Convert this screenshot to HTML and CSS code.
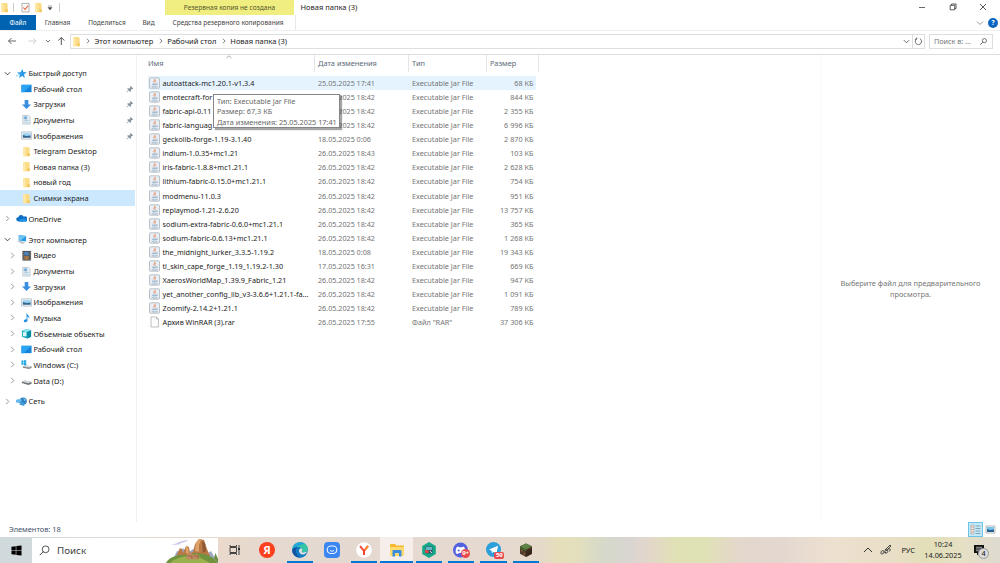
FILE: index.html
```html
<!DOCTYPE html>
<html lang="ru">
<head>
<meta charset="UTF-8">
<meta name="viewport" content="width=device-width, initial-scale=1.0">
<title>Новая папка (3)</title>
<link rel="stylesheet" href="styles.css">
</head>
<body>

<!-- icons -->
<svg class="defs">
  <symbol id="folder" viewBox="0 0 12 12"><path d="M2.500 1h5l2 1v9.300h-7z" fill="#fbdc86"/><path d="M2.500 1l2.500 1v9.600L2.500 11z" fill="#ffe9a8"/><path d="M7 8h2.500v3H7z" fill="#efc45c"/></symbol>
  <symbol id="star" viewBox="0 0 12 12"><path d="M7 1l1.100 3.400 3.700.2-3 2.200.9 4L6.600 8.600 3.200 11l1-4L1 4.800l3.900-.3z" fill="#2e9be6"/><path d="M0 9l3-2" stroke="#7dc3f2"/></symbol>
  <symbol id="desktop" viewBox="0 0 12 12"><path d="M.5 2h11v8H.5z" fill="#1583d8"/><path d="M.5 2h11L3 10H.5z" fill="#28a4f2"/></symbol>
  <symbol id="down" viewBox="0 0 12 12"><path d="M4 1h4v5h3l-5 5-5-5h3z" fill="#3a8ee0"/></symbol>
  <symbol id="doc" viewBox="0 0 12 12"><path d="M2 1.500h6l2 2V11H2z" fill="#eef4f8" stroke="#9fb0bc" stroke-width=".7"/><path d="M3.500 3h3v2.500h-3zM3.500 7h5M3.500 9h5" fill="#5ea7dd" stroke="#8fb8d4" stroke-width=".8"/></symbol>
  <symbol id="image" viewBox="0 0 12 12"><path d="M.5 2h11v8H.5z" fill="#edf3f7" stroke="#a5b0b8" stroke-width=".7"/><path d="M2 3.500h8.500v3H2z" fill="#9ad3f4"/><path d="M2 5.500l4 1 4.500-.5V8.500H2z" fill="#34658c"/></symbol>
  <symbol id="cloud" viewBox="0 0 12 12"><path d="M1 8.500a2.300 2.300 0 0 1 1.500-4A3.300 3.300 0 0 1 8.500 4a2.800 2.800 0 0 1 2.200 5.300H2.600z" fill="#0f6fc6"/><path d="M4 9.500a2 2 0 0 1 2-3c2-1.500 5.500 0 5.600 1.500 0 1-.6 1.500-1.500 1.500z" fill="#2193e6"/></symbol>
  <symbol id="pc" viewBox="0 0 12 12"><path d="M3 1l8 1.300v6L3 7z" fill="#2597e3"/><path d="M3 1l8 1.300-6 5L3 7z" fill="#6fc1f0"/><path d="M1 8l3-.6 6 2-3 1.400z" fill="#b9c5cd"/></symbol>
  <symbol id="video" viewBox="0 0 12 12"><path d="M1.500 1h9.500v10.500H1.500z" fill="#45484d"/><path d="M3.500 2h5v4h-5z" fill="#4f83bb"/><path d="M3.500 6.600h5v4h-5z" fill="#a67845"/><path d="M2.200 2v9M10 2v9" stroke="#ddd" stroke-width=".8" stroke-dasharray="1"/></symbol>
  <symbol id="music" viewBox="0 0 12 12"><path d="M6 1c.5 2 4 3 3 6-.5-1.500-1.500-2-2-2v4.500c0 1.500-3.500 2.500-4 .7C2.800 8.500 5 7.600 6 8z" fill="#1e90e4"/></symbol>
  <symbol id="cube" viewBox="0 0 12 12"><path d="M1 3l5-2 5 1.500v7L7 11.500 1 9.500z" fill="#15a9bd"/><path d="M1 3l5 1.500 5-2L6 1z" fill="#8be7ee"/><path d="M2 4.500h4V9H2z" fill="#d9f6f8"/><path d="M6.500 4.500l4.500-2v7l-4 2z" fill="#0c8ca6"/></symbol>
  <symbol id="disk" viewBox="0 0 12 12"><path d="M1 7.200L4.500 6l7 1.500v2L8 11 1 8.800z" fill="#6c7276"/><path d="M1 7.200L4.500 6l7 1.500L8 9z" fill="#d9dee1"/></symbol>
  <symbol id="windisk" viewBox="0 0 12 12"><path d="M2 8l3-1 6.500 1v1.800L8.500 11 2 9.500z" fill="#868c90"/><path d="M2 8l3-1 6.500 1-3 1.200z" fill="#d9dee1"/><path d="M.5 1.500h2.200v2.200H.5zM3.200 1.300h2.500v2.400H3.200zM.5 4.200h2.200v2.200H.5zM3.200 4.200h2.500v2.500H3.200z" fill="#14a6e4"/></symbol>
  <symbol id="net" viewBox="0 0 12 12"><circle cx="7.800" cy="5.500" r="4" fill="#2b7fc0"/><path d="M0 4l6-1v5L0 7z" fill="#63b9ed"/><path d="M4 6l5 1.200v3.600L4 9.500z" fill="#409bd7"/><path d="M8 2l3 2-2 2z" fill="#7fc2e6"/></symbol>
  <symbol id="pin" viewBox="0 0 8 8"><path d="M4.500.8l2.700 2.700-.8.500-.4-.1-1.200 1.200.1 1.300-.6.600L1.200 3.900l.6-.6 1.300.1L4.300 2.200l-.1-.6z" fill="#89949d"/><path d="M2.700 5.200L.8 7.200" stroke="#89949d" stroke-width=".8"/></symbol>
  <symbol id="right" viewBox="0 0 8 8"><path d="M2.500 1l3 3-3 3" fill="none" stroke="currentColor" stroke-width="1"/></symbol>
  <symbol id="open" viewBox="0 0 8 8"><path d="M1 2.500l3 3 3-3" fill="none" stroke="currentColor" stroke-width="1"/></symbol>
  <symbol id="jar" viewBox="0 0 11 12"><rect x=".5" y=".8" width="10" height="10.400" rx=".8" fill="#e8eef3" stroke="#aab4bd" stroke-width=".8"/><path d="M5.800 1.800c.8 1.500-2 2-.7 3.700M7 3.200c-1.400.8-1 1.300-.8 2.300" fill="none" stroke="#e8885c" stroke-width=".9"/><path d="M3.200 6.500h4v1.200c0 .9-4 .9-4 0z" fill="#a3bcd2"/><path d="M7.300 6.800h1v.8h-1M2.600 9.600q3 .8 6 0" fill="none" stroke="#86a3bd" stroke-width=".7"/></symbol>
  <symbol id="file" viewBox="0 0 11 12"><path d="M2 1h5.500l2 2v8H2z" fill="#fcfcfc" stroke="#999" stroke-width=".6"/><path d="M7.500 1v2h2" fill="none" stroke="#999" stroke-width=".6"/></symbol>
</svg>

<div class="window">
  <div class="titlebar">
    <div class="quick">
      <svg class="ico"><use href="#folder"/></svg>
      <i class="bar"></i>
      <svg class="check" viewBox="0 0 10 12"><path d="M1 1.500h8v9.500H1z" fill="#f8f8f8" stroke="#999" stroke-width=".8"/><path d="M2.500 6l2 2.200L8 4" fill="none" stroke="#e2693d" stroke-width="1.200"/></svg>
      <svg class="ico"><use href="#folder"/></svg>
      <svg class="drop" viewBox="0 0 6 6"><path d="M1 1h4M1 2.500h4L3 5z" stroke="#555" stroke-width=".5" fill="#444"/></svg>
      <i class="bar"></i>
    </div>
    <div class="context">Резервная копия не создана</div>
    <div class="title">Новая папка (3)</div>
    <div class="controls">
      <svg viewBox="0 0 8 8"><path d="M1 4.500h6" stroke="#444" stroke-width=".8"/></svg>
      <svg viewBox="0 0 8 8"><path d="M1.200 2.300h4.500v4.500H1.200zM2.500 2.300V1h4.500v4.500H5.700" fill="none" stroke="#333" stroke-width=".8"/></svg>
      <svg viewBox="0 0 8 8"><path d="M1 1l6 6M7 1L1 7" stroke="#333" stroke-width=".8"/></svg>
    </div>
  </div>

  <div class="tabs">
    <div class="tab file">Файл</div>
    <div class="tab main">Главная</div>
    <div class="tab share">Поделиться</div>
    <div class="tab view">Вид</div>
    <div class="tab backup">Средства резервного копирования</div>
    <svg class="fold"><use href="#open"/></svg>
    <div class="help">?</div>
  </div>

  <div class="address">
    <svg class="nav" viewBox="0 0 66 12">
      <g fill="none" stroke="#555" stroke-width=".9"><path d="M16 6H8.500M11.500 3l-3 3 3 3"/><path d="M28.500 6H36M33 3l3 3-3 3" stroke="#ccc"/><path d="M46 5l2 2 2-2" stroke="#777"/><path d="M61.300 10V2.500M58.300 5.500l3-3 3 3" stroke-width="1"/></g>
    </svg>
    <div class="path">
      <svg class="ico"><use href="#folder"/></svg>
      <svg class="sep"><use href="#right"/></svg><span>Этот компьютер</span>
      <svg class="sep"><use href="#right"/></svg><span>Рабочий стол</span>
      <svg class="sep"><use href="#right"/></svg><span>Новая папка (3)</span>
      <svg class="sep end"><use href="#open"/></svg>
    </div>
    <div class="refresh"><svg viewBox="0 0 10 10"><path d="M6.500 1.800A3.500 3.500 0 1 1 3 2M3 .5V2.500H1" fill="none" stroke="#555" stroke-width=".9"/></svg></div>
    <div class="find"><span>Поиск в: ...</span><svg viewBox="0 0 10 10"><circle cx="6" cy="4" r="2.300" fill="none" stroke="#555" stroke-width=".9"/><path d="M4.300 5.700L1.500 8.500" stroke="#555"/></svg></div>
  </div>

  <div class="content">
    <div class="tree" id="tree"></div>
    <div class="files">
      <div class="head">
        <div class="name">Имя<svg class="sort" viewBox="0 0 8 4"><path d="M1.500 3L4 .8 6.500 3" fill="none" stroke="#888" stroke-width=".7"/></svg></div>
        <div class="date">Дата изменения</div>
        <div class="type">Тип</div>
        <div class="size">Размер</div>
      </div>
      <div id="rows"></div>
      <div class="tooltip">
        <div>Тип: Executable Jar File</div>
        <div>Размер: 67,3 КБ</div>
        <div>Дата изменения: 25.05.2025 17:41</div>
      </div>
    </div>
    <div class="preview">Выберите файл для предварительного<br>просмотра.</div>
  </div>

  <div class="status">
    <span>Элементов: 18</span>
    <div class="modes">
      <svg class="on" viewBox="0 0 15 15"><path d="M3 3h3v9H3z" fill="#f5f5f5" stroke="#999" stroke-width=".6"/><path d="M3.500 5h2M3.500 7.500h2M3.500 10h2" stroke="#c98a6a"/><path d="M7.500 4h5M7.500 6.500h5M7.500 9h5M7.500 11.500h5" stroke="#6f93a5" stroke-width=".8"/></svg>
      <svg viewBox="0 0 15 15"><path d="M3 4h9v7H3z" fill="#fff" stroke="#999" stroke-width=".7"/><path d="M4 5h7v3H4z" fill="#79c3ef"/><path d="M4 7l3 1 4-.5V10H4z" fill="#23618f"/></svg>
    </div>
  </div>
</div>

<div class="taskbar">
  <div class="start"><svg viewBox="0 0 12 12"><path d="M.5 2l4.700-.7v4.400H.5zM5.800 1.200L11.500.5v5.200H5.800zM.5 6.300h4.700v4.400L.5 10zM5.800 6.300h5.700v5.200l-5.700-.7z"/></svg></div>
  <div class="search">
    <svg class="lens" viewBox="0 0 12 12"><circle cx="7.200" cy="4.700" r="3.700" fill="none" stroke="#333" stroke-width=".9"/><path d="M4.700 7.200L.8 11.100" stroke="#333"/></svg>
    <span>Поиск</span>
    <svg class="scene" viewBox="0 0 52 25">
      <path d="M4 7c5 0 8-4 18-5-2 2.500-7 2.500-9 4.500z" fill="#c9c6e8"/>
      <path d="M8 19l3-6 3 1 3-4 4 5 8-5 7 3 3-2 3 4 3-2 5 9z" fill="#9fa9c7"/>
      <path d="M10 19l2-5 2-4 2 1 1 4 3-7 3 1 1 6 3-1 2-8 4-5 5 1 3 9 3 7z" fill="#b87945"/>
      <path d="M29 13l1-9 3-3 2 1-2 5v7zM20 15V9l2-1 1 8z" fill="#dda36a"/>
      <path d="M36 3l3 2 1 8-3 2z" fill="#8f5734"/>
      <path d="M0 25c3-6 12-9 22-8 9-4 24-1 30 8z" fill="#70933f"/>
      <path d="M5 24c8-6 18-7 30-4l9 5H5z" fill="#9bb14e"/>
      <path d="M20 20l1-4 4-1 2 2 4-1 3 3-3 2.500H22z" fill="#c18b62"/><path d="M21 18h5v3M28 18h4v3" fill="none" stroke="#8d5838" stroke-width=".7"/>
      <path d="M48 20l1.500-5 2.500 6v4z" fill="#6a8b45"/>
    </svg>
  </div>
  <div class="apps">
    <div class="app"><svg viewBox="0 0 16 16"><path d="M3 3v1.500h6.500V3M3 13v-1.500h6.500V13M3 5.500h6.500v5H3zM12 3v10" fill="none" stroke="#333" stroke-width=".9"/><path d="M11 6h2v2h-2z" fill="#333"/></svg></div>
    <div class="app"><svg viewBox="0 0 16 16"><circle cx="8" cy="8" r="8" fill="#fc3f1d"/><text x="8" y="12" text-anchor="middle" class="ya">Я</text></svg></div>
    <div class="app run"><svg viewBox="0 0 16 16"><circle cx="8" cy="8" r="7.800" fill="#137bc4"/><path d="M.4 7C1 2.500 4.500.2 8.200.2c4.500 0 7.600 3 7.600 6.500 0 2.500-1.800 3.800-4 3.800-2.300 0-2.500-1-2-1.800C10.500 6.500 8 5 5.500 5 3 5 1 6 .4 7z" fill="#35c4a5"/><path d="M.4 7C1 2.500 4.500.2 8.200.2c2 0 4 .8 5.300 2C9 1.500 8 4 5.500 5 3 5 1 6 .4 7z" fill="#27a6d8"/><path d="M7 8.500c.3-1.700 1.500-2.200 2.500-2 1 .5.900 1.600.3 2.400-.5.900.3 1.600 2 1.600 1.500 0 2.800-.6 3.500-1.200-.8 2-2.300 3.200-4.300 3.200-2.500 0-4.300-1.700-4-4z" fill="#e5e3df"/><path d="M5.500 5C2.500 8 4 14.500 9 15.700 4 16 0 12.500.2 8 1 6 3 5 5.500 5z" fill="#1155a3"/></svg></div>
    <div class="app"><svg viewBox="0 0 16 16"><rect width="16" height="16" rx="4" fill="#3c86f2"/><rect x="3.200" y="4" width="9.600" height="7.500" rx="3.700" fill="none" stroke="#e8f3ff" stroke-width="1.200"/><path d="M6 8.500q2 1.500 4 0" fill="none" stroke="#fff" stroke-width=".9"/></svg></div>
    <div class="app run"><svg viewBox="0 0 16 16"><circle cx="8" cy="8" r="7.800" fill="#fff"/><path d="M4 4l4 5 4-5M8 8.500V13" fill="none" stroke="#f5402f" stroke-width="2"/><path d="M9 7.800L12.200 3.800" stroke="#fb8a28" stroke-width="2"/></svg></div>
    <div class="app run active"><svg viewBox="0 0 16 16"><path d="M1 2h5l1.500 1.500H15V14H1z" fill="#f5b934"/><path d="M1 5h14v9H1z" fill="#ffda70"/><path d="M3.500 14.500V9q0-1 1-1h7q1 0 1 1v5.500H10V11H6v3.500z" fill="#3a8dde"/></svg></div>
    <div class="app run"><svg viewBox="0 0 16 16"><path d="M8 0l6.800 4v8L8 16l-6.800-4V4z" fill="#15a886"/><path d="M4.500 4.500h7v7h-7z" fill="#35586a"/><path d="M5 5h6v3H5z" fill="#69b5c4"/><path d="M4 8h3.500v3H4z" fill="#d74848"/><path d="M9 9l2 2" stroke="#ddd"/></svg></div>
    <div class="app run"><svg viewBox="0 0 16 16"><circle cx="7.500" cy="8" r="7.500" fill="#5360df"/><path d="M3 11.500C2 8 3.500 4.500 5 4.500l1 .7h3l1-.7c1.500 0 3 3.500 2 7l-2 .5-.7-1H5.800l-.8 1z" fill="#fff"/><circle cx="5.700" cy="8.500" r="1" fill="#5360df"/></svg><b class="badge">9+</b></div>
    <div class="app run"><svg viewBox="0 0 16 16"><circle cx="7.500" cy="7.500" r="7.500" fill="#2a9fda"/><path d="M3 7.500l9-3.700-1.500 8-3-2-1.500 1.500-.4-2.500z" fill="#fff"/></svg><b class="badge square">59</b></div>
    <div class="app run"><svg viewBox="0 0 16 16"><path d="M8 1.500l6 2.700v7.600L8 15l-6-3.200V4.200z" fill="#533a29"/><path d="M8 1.500l6 2.700L8 7.500 2 4.200z" fill="#5f8545"/><path d="M2 4.200l6 3.300v1.800L2 6.500z" fill="#40672f"/><path d="M8 9v6l6-3.200V6z" fill="#3a271c"/><path d="M3 8h1.500v1.500H3zM5.500 11H7v1.500H5.500z" fill="#805a3d"/></svg></div>
  </div>
  <div class="tray">
    <svg class="up" viewBox="0 0 10 10"><path d="M1 7l4-4 4 4" fill="none" stroke="#333"/></svg>
    <svg class="pen" viewBox="0 0 12 12"><path d="M1 9c0-3 3-3 3-1S1 11 1 9zM4 8c3 3 5-1 3-2S4 8 6 9M5 6l5-5 1 1-5 5M8 5c3-1 3 2 1 2" fill="none" stroke="#333" stroke-width=".9"/></svg>
    <span class="lang">РУС</span>
    <div class="clock"><div>10:24</div><div>14.06.2025</div></div>
    <div class="notice"><svg viewBox="0 0 12 12"><path d="M1 1h10v8H6l-2 2.500V9H1z" fill="#111"/><path d="M3 3.300h6M3 5h6M3 6.700h4" stroke="#ddd" stroke-width=".7"/></svg><b>4</b></div>
  </div>
</div>

<script>
  // icon, label, level, arrow, pinned
  const tree = [
    [
      ['star', 'Быстрый доступ', 0, 'open'],
      ['desktop', 'Рабочий стол', 1, '', true],
      ['down', 'Загрузки', 1, '', true],
      ['doc', 'Документы', 1, '', true],
      ['image', 'Изображения', 1, '', true],
      ['folder', 'Telegram Desktop', 1, ''],
      ['folder', 'Новая папка (3)', 1, ''],
      ['folder', 'новый год', 1, ''],
      ['folder', 'Снимки экрана', 1, '']
    ],
    [['cloud', 'OneDrive', 0, 'right']],
    [
      ['pc', 'Этот компьютер', 0, 'open'],
      ['video', 'Видео', 1, 'right'],
      ['doc', 'Документы', 1, 'right'],
      ['down', 'Загрузки', 1, 'right'],
      ['image', 'Изображения', 1, 'right'],
      ['music', 'Музыка', 1, 'right'],
      ['cube', 'Объемные объекты', 1, 'right'],
      ['desktop', 'Рабочий стол', 1, 'right'],
      ['windisk', 'Windows (C:)', 1, 'right'],
      ['disk', 'Data (D:)', 1, 'right']
    ],
    [['net', 'Сеть', 0, 'right']]
  ];

  const files = [
    ['autoattack-mc1.20.1-v1.3.4', '25.05.2025 17:41', '68'],
    ['emotecraft-for', '26.05.2025 18:42', '844'],
    ['fabric-api-0.11', '26.05.2025 18:42', '2 355'],
    ['fabric-languag', '26.05.2025 18:42', '6 996'],
    ['geckolib-forge-1.19-3.1.40', '18.05.2025 0:06', '2 870'],
    ['indium-1.0.35+mc1.21', '26.05.2025 18:43', '103'],
    ['iris-fabric-1.8.8+mc1.21.1', '26.05.2025 18:42', '2 628'],
    ['lithium-fabric-0.15.0+mc1.21.1', '26.05.2025 18:42', '754'],
    ['modmenu-11.0.3', '26.05.2025 18:42', '951'],
    ['replaymod-1.21-2.6.20', '26.05.2025 18:42', '13 757'],
    ['sodium-extra-fabric-0.6.0+mc1.21.1', '26.05.2025 18:42', '365'],
    ['sodium-fabric-0.6.13+mc1.21.1', '26.05.2025 18:42', '1 268'],
    ['the_midnight_lurker_3.3.5-1.19.2', '18.05.2025 0:08', '19 343'],
    ['tl_skin_cape_forge_1.19_1.19.2-1.30', '17.05.2025 16:31', '669'],
    ['XaerosWorldMap_1.39.9_Fabric_1.21', '26.05.2025 18:42', '947'],
    ['yet_another_config_lib_v3-3.6.6+1.21.1-fa...', '26.05.2025 18:42', '1 091'],
    ['Zoomify-2.14.2+1.21.1', '26.05.2025 18:42', '789'],
    ['Архив WinRAR (3).rar', '26.05.2025 17:55', '37 306']
  ];

  document.getElementById('tree').innerHTML = tree.map(group =>
    '<div class="group">' + group.map(([icon, label, level, arrow, pinned]) => `
      <div class="node level${level}${label === 'Снимки экрана' ? ' selected' : ''}">
        <svg class="arrow ${arrow}">${arrow ? `<use href="#${arrow}"/>` : ''}</svg>
        <svg class="ico"><use href="#${icon}"/></svg>
        <span>${label}</span>
        ${pinned ? '<svg class="pin"><use href="#pin"/></svg>' : ''}
      </div>`).join('') + '</div>').join('');

  document.getElementById('rows').innerHTML = files.map(([name, date, size], i) => {
    const rar = name.endsWith('.rar');
    return `
      <div class="row${i === 0 ? ' hover' : ''}">
        <svg class="fico"><use href="#${rar ? 'file' : 'jar'}"/></svg>
        <div class="name">${name}</div>
        <div class="date">${date}</div>
        <div class="type">${rar ? 'Файл "RAR"' : 'Executable Jar File'}</div>
        <div class="size">${size} КБ</div>
      </div>`;
  }).join('');
</script>
</body>
</html>
```

FILE: styles.css
```css
* {
  box-sizing: border-box;
}
body {
  display: flex;
  flex-direction: column;
  width: 1000px;
  height: 563px;
  margin: 0;
  overflow: hidden;
  background: #fff;
  color: #222;
  font-family: "Noto Sans", "Open Sans", sans-serif;
  font-size: 7.2px;
  white-space: nowrap;
}
svg {
  display: block;
  flex: none;
}
.defs {
  position: absolute;
  width: 0;
  height: 0;
}
.ico {
  width: 11px;
  height: 11px;
}
.window {
  display: flex;
  flex-direction: column;
  height: 537px;
}

/* title */
.titlebar {
  display: flex;
  height: 15px;
}
.quick {
  display: flex;
  align-items: center;
  width: 165px;
}
.quick .bar {
  width: 1px;
  height: 9px;
  background: #ccc;
}
.quick .ico:first-child {
  margin-left: -1px;
  margin-right: 3px;
}
.check {
  width: 9px;
  height: 11px;
  margin: 0 3px 0 7px;
}
.drop {
  width: 6px;
  height: 6px;
  margin: 0 6px 0 3px;
}
.context {
  width: 129px;
  background: #f0ee80;
  color: #55552c;
  font-size: 6.6px;
  line-height: 15px;
  text-align: center;
}
.title {
  flex: 1;
  padding-left: 6.500px;
  font-size: 7.5px;
  line-height: 15px;
}
.controls {
  display: flex;
  gap: 22.500px;
  padding: 3px 13px 0 0;
}
.controls svg {
  width: 8px;
  height: 8px;
}

/* ribbon tabs */
.tabs {
  display: flex;
  align-items: center;
  height: 15px;
  font-size: 6.5px;
  color: #444;
}
.tab {
  height: 15px;
  line-height: 15px;
  text-align: center;
}
.file {
  width: 36px;
  background: #0063b1;
  color: #fff;
}
.main {
  width: 43px;
}
.share {
  width: 56px;
}
.view {
  width: 27px;
}
.backup {
  width: 132px;
  padding-right: 3px;
  margin-left: 2px;
  border-right: 1px solid #e8e8e8;
}
.fold {
  width: 8px;
  height: 8px;
  margin-left: auto;
  color: #999;
}
.help {
  width: 10px;
  height: 10px;
  margin: 0 2px 0 4px;
  border-radius: 50%;
  background: #0a66c2;
  color: #fff;
  font-weight: bold;
  line-height: 10px;
  text-align: center;
}

/* address */
.address {
  display: flex;
  align-items: center;
  height: 25px;
  padding-bottom: 3px;
  border-top: 1px solid #f0f0f0;
  border-bottom: 1px solid #dcdcdc;
}
.nav {
  width: 66px;
  height: 12px;
  margin-right: 4px;
}
.path {
  display: flex;
  align-items: center;
  width: 843px;
  height: 15px;
  border: 1px solid #dedede;
  font-size: 7.5px;
}
.sep {
  width: 6px;
  height: 6px;
  margin: 0 3.500px 0 4.500px;
  color: #555;
}
.path .ico + .sep {
  margin-left: 3px;
}
.sep.end {
  width: 7px;
  height: 7px;
  margin: 0 2px 0 auto;
}
.refresh {
  display: flex;
  align-items: center;
  justify-content: center;
  width: 12px;
  height: 15px;
  border: 1px solid #dedede;
  border-left: 0;
}
.refresh svg,
.find svg {
  width: 9px;
  height: 9px;
}
.find {
  display: flex;
  align-items: center;
  justify-content: space-between;
  width: 64px;
  height: 15px;
  margin-left: 4px;
  padding: 0 4px;
  border: 1px solid #dedede;
  color: #777;
}

/* content */
.content {
  display: flex;
  flex: 1;
}
.tree {
  width: 137px;
  padding-top: 10.200px;
  border-right: 1px solid #f0f0f0;
  font-size: 7.450px;
}
.group {
  margin-bottom: 5.200px;
}
.node {
  display: flex;
  align-items: center;
  width: 135px;
  height: 15.650px;
  padding-left: 4px;
}
.level1 {
  padding-left: 9px;
}
.node.selected {
  background: #cce8ff;
}
.arrow {
  width: 7px;
  height: 7px;
  margin-right: 4.500px;
  color: #888;
}
.arrow.open {
  color: #333;
}
.node .ico {
  margin-right: 1.900px;
}
.pin {
  width: 8px;
  height: 8px;
  margin-left: auto;
  margin-right: 1px;
}
.files {
  position: relative;
  width: 683px;
  padding-left: 11px;
}
.head {
  display: flex;
  height: 17px;
  margin-bottom: 4px;
  color: #5b6878;
  font-size: 7.4px;
  line-height: 17px;
}
.head div {
  border-right: 1px solid #e5e5e5;
}
.head .name {
  position: relative;
  width: 167px;
}
.sort {
  position: absolute;
  left: 77px;
  top: 0;
  width: 8px;
  height: 4px;
}
.head .date {
  width: 94px;
  padding-left: 3px;
}
.head .type {
  width: 78px;
  padding-left: 3px;
}
.head .size {
  width: 52px;
  padding-left: 3px;
}
.row {
  display: flex;
  align-items: center;
  width: 388px;
  height: 14.070px;
  color: #747474;
  font-size: 7.280px;
}
.row.hover {
  background: #e5f3ff;
}
.fico {
  width: 11px;
  height: 12px;
  margin: 0 2.500px 0 1px;
}
.row .name {
  width: 155.500px;
  color: #222;
}
.row .date {
  width: 94px;
  font-size: 7.2px;
}
.row .type {
  width: 72px;
}
.row .size {
  width: 49.500px;
  text-align: right;
}
.tooltip {
  position: absolute;
  left: 76px;
  top: 39px;
  width: 127px;
  height: 34px;
  padding: .5px 0 0 3px;
  border: 1px solid #858585;
  background: #fff;
  box-shadow: 2px 2px 1px rgba(0, 0, 0, .35);
  color: #666;
  font-size: 7.3px;
  line-height: 10.500px;
}
.preview {
  width: 180px;
  padding-top: 223px;
  border-left: 1px solid #fafafa;
  color: #777;
  font-size: 7.4px;
  line-height: 10.500px;
  text-align: center;
}
.status {
  display: flex;
  justify-content: space-between;
  height: 15px;
  padding-left: 9px;
  color: #3f526b;
  font-size: 7.4px;
  line-height: 15px;
}
.modes {
  display: flex;
  padding-right: 2px;
}
.modes svg {
  width: 15px;
  height: 15px;
}
.modes .on {
  background: #c4eafa;
  outline: 1px solid #6cc3e6;
  outline-offset: -1px;
}

/* taskbar */
.taskbar {
  display: flex;
  height: 26px;
  background: linear-gradient(90deg, #d0dadd 0, #d0dadd 32px, #ead9cc 220px, #e4d9d1 300px, #e6d9d0 500px, #e5d9ca 540px, #e5dfba 560px, #e3dfbe 578px, #d5d9ca 605px, #dad5d2 630px, #e3d7ca 650px, #e0e1b5 676px, #dfe2b4 702px, #e4d7cc 740px, #e3d7d0 780px, #eee0d0 830px, #e8dec5 900px, #e2dfb8 925px, #e6e0c4 960px, #dedad0 1000px);
}
.start {
  display: flex;
  align-items: center;
  justify-content: center;
  width: 32px;
}
.start svg {
  width: 11px;
  height: 11px;
}
.search {
  display: flex;
  align-items: center;
  width: 186px;
  height: 25px;
  margin-top: 1px;
  background: #fff;
  color: #444;
  font-size: 9.800px;
}
.lens {
  width: 11px;
  height: 11px;
  margin: 0 7px 0 7px;
}
.scene {
  width: 52px;
  height: 25px;
  margin-left: auto;
}
.apps {
  display: flex;
}
.app {
  position: relative;
  display: flex;
  align-items: center;
  justify-content: center;
  width: 32.300px;
}
.app:first-child {
  width: 33.300px;
}
.app svg {
  width: 16px;
  height: 16px;
}
.app.run::after {
  content: "";
  position: absolute;
  left: 3px;
  right: 3px;
  bottom: 0;
  height: 2px;
  background: #0078d4;
}
.app.active {
  background: #f5eeea;
}
.app.active::after {
  left: 0;
  right: 0;
}
.ya {
  fill: #fff;
  font-size: 11px;
  font-weight: bold;
}
.badge {
  position: absolute;
  left: 16px;
  top: 12px;
  width: 9px;
  height: 9px;
  border-radius: 50%;
  background: #e9494d;
  color: #fff;
  font-size: 6px;
  line-height: 9px;
  text-align: center;
}
.badge.square {
  top: 15px;
  left: 17px;
  width: 10px;
  height: 7px;
  border-radius: 2px;
  line-height: 7px;
}
.tray {
  display: flex;
  align-items: center;
  margin-left: auto;
}
.up {
  width: 10px;
  height: 10px;
  margin-right: 7px;
}
.pen {
  width: 12px;
  height: 12px;
  margin-right: 9px;
}
.lang {
  font-size: 7.500px;
}
.clock {
  width: 38px;
  margin: 0 11px 0 9px;
  font-size: 7.300px;
  line-height: 11.500px;
  text-align: center;
}
.notice {
  position: relative;
  width: 27px;
}
.notice svg {
  width: 12px;
  height: 12px;
}
.notice b {
  position: absolute;
  left: 5px;
  top: 4px;
  width: 11px;
  height: 11px;
  border: 1px solid #999;
  border-radius: 50%;
  background: #ddd;
  font-weight: 500;
  line-height: 9px;
  text-align: center;
}
```
